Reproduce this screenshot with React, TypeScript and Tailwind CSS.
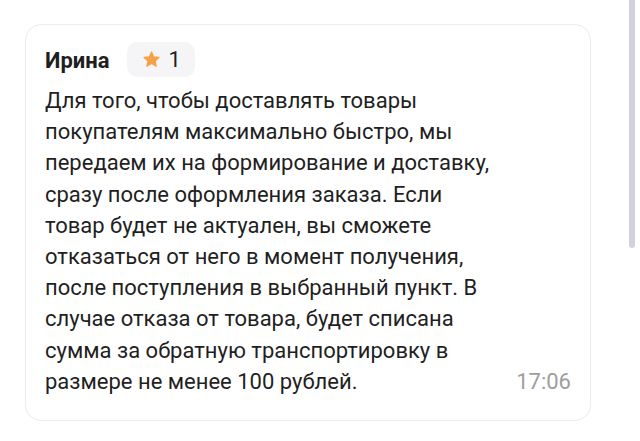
import React from "react";

const lines = [
  "Для того, чтобы доставлять товары",
  "покупателям максимально быстро, мы",
  "передаем их на формирование и доставку,",
  "сразу после оформления заказа. Если",
  "товар будет не актуален, вы сможете",
  "отказаться от него в момент получения,",
  "после поступления в выбранный пункт. В",
  "случае отказа от товара, будет списана",
  "сумма за обратную транспортировку в",
];

export default function App() {
  return (
    <div className="relative w-[640px] h-[441px] bg-white overflow-hidden" style={{ fontFamily: "Roboto, 'Noto Sans', sans-serif" }}>
      <div className="absolute right-[5px] top-0 w-[6px] h-[248px] rounded-b-full bg-[#d3d1dd]" />
      <div className="pt-[24px] pl-[25px] w-[591px]">
        <div className="rounded-[16px] border border-[#ececec] bg-white pl-[19px] pr-[19px] pt-[17px] pb-[23px]">
          <div className="flex items-center gap-[18px]">
            <span className="text-[22px] font-bold text-[#1f1f1f] leading-[26px] pt-[3px]">Ирина</span>
            <div className="flex items-center gap-[7px] h-[35px] pl-[15px] pr-[14px] rounded-[10px] bg-[#f5f5f7]">
              <svg width="19" height="19" viewBox="0 0 24 24">
                <path d="M12 2.5l2.9 6.2 6.6.7-4.9 4.5 1.4 6.6L12 17.1l-5.9 3.4 1.4-6.6-4.9-4.5 6.6-.7z" fill="#f7a04a" stroke="#f7a04a" strokeWidth="1.5" strokeLinejoin="round" />
              </svg>
              <span className="text-[22px] text-[#1f1f1f] leading-[26px]">1</span>
            </div>
          </div>
          <div className="mt-[8px] text-[22px] leading-[31.2px] text-[#1f1f1f]">
            {lines.map((l, i) => (
              <div key={i}>{l}</div>
            ))}
            <div className="flex justify-between">
              <span>размере не менее 100 рублей.</span>
              <span className="text-[#9e9e9e]">17:06</span>
            </div>
          </div>
        </div>
      </div>
    </div>
  );
}
